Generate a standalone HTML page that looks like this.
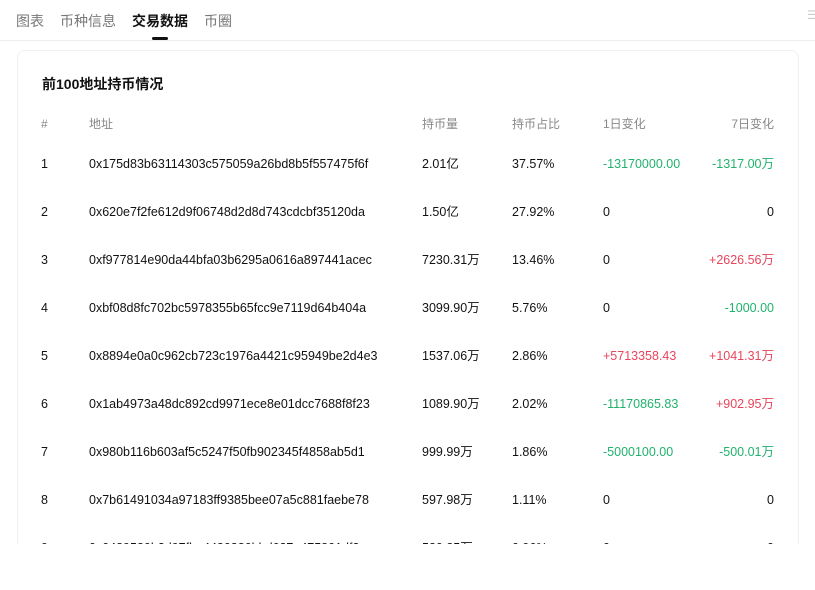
<!DOCTYPE html>
<html><head><meta charset="utf-8"><style>
*{margin:0;padding:0;box-sizing:border-box}
html,body{width:815px;height:590px;overflow:hidden}
body{background:#fff;font-family:"Liberation Sans","Noto Sans CJK SC",sans-serif;position:relative;color:#111}
.tabs{position:absolute;top:0;left:0;width:815px;height:41px;border-bottom:1px solid #eee}
.tab{position:absolute;top:11px;font-size:14px;color:#777}
.tab.a{color:#111;font-weight:bold}
.ul{position:absolute;left:152px;top:37px;width:16px;height:3px;background:#111;border-radius:2px}
.clip{position:absolute;left:0;top:41px;width:815px;height:503px;overflow:hidden}
.card{position:absolute;left:17px;top:9px;width:782px;height:540px;border:1px solid #f0f0f0;border-radius:8px}
h3{position:absolute;left:42px;top:75px;font-size:14px;font-weight:bold;line-height:18px}
.r{position:absolute;left:0;width:815px;font-size:12.5px;height:16px;line-height:16px}
.r span{position:absolute;top:0;line-height:16px;height:16px;white-space:nowrap}
.h{color:#888;font-size:12px}
.g{color:#20b26c}.d{color:#e8455c}
</style></head><body>
<div class="tabs">
<span class="tab" style="left:16px">图表</span>
<span class="tab" style="left:60px">币种信息</span>
<span class="tab a" style="left:132px">交易数据</span>
<span class="tab" style="left:204px">币圈</span>
<div class="ul"></div>
<span style="position:absolute;left:807px;top:8px;color:#ccc;font-size:12px">☰</span>
</div>
<div class="clip">
<div class="card"></div>
<div style="position:absolute;left:0;top:-41px;width:815px;height:590px">
<h3>前100地址持币情况</h3>
<div class="r h" style="top:116px"><span style="left:41px">#</span><span style="left:89px">地址</span><span style="left:422px">持币量</span><span style="left:512px">持币占比</span><span style="left:603px">1日变化</span><span style="right:41px">7日变化</span></div>
<div class="r" style="top:156px"><span style="left:41px">1</span><span style="left:89px">0x175d83b63114303c575059a26bd8b5f557475f6f</span><span style="left:422px">2.01亿</span><span style="left:512px">37.57%</span><span class="g" style="left:603px">-13170000.00</span><span class="g" style="right:41px">-1317.00万</span></div>
<div class="r" style="top:204px"><span style="left:41px">2</span><span style="left:89px">0x620e7f2fe612d9f06748d2d8d743cdcbf35120da</span><span style="left:422px">1.50亿</span><span style="left:512px">27.92%</span><span style="left:603px">0</span><span style="right:41px">0</span></div>
<div class="r" style="top:252px"><span style="left:41px">3</span><span style="left:89px">0xf977814e90da44bfa03b6295a0616a897441acec</span><span style="left:422px">7230.31万</span><span style="left:512px">13.46%</span><span style="left:603px">0</span><span class="d" style="right:41px">+2626.56万</span></div>
<div class="r" style="top:300px"><span style="left:41px">4</span><span style="left:89px">0xbf08d8fc702bc5978355b65fcc9e7119d64b404a</span><span style="left:422px">3099.90万</span><span style="left:512px">5.76%</span><span style="left:603px">0</span><span class="g" style="right:41px">-1000.00</span></div>
<div class="r" style="top:348px"><span style="left:41px">5</span><span style="left:89px">0x8894e0a0c962cb723c1976a4421c95949be2d4e3</span><span style="left:422px">1537.06万</span><span style="left:512px">2.86%</span><span class="d" style="left:603px">+5713358.43</span><span class="d" style="right:41px">+1041.31万</span></div>
<div class="r" style="top:396px"><span style="left:41px">6</span><span style="left:89px">0x1ab4973a48dc892cd9971ece8e01dcc7688f8f23</span><span style="left:422px">1089.90万</span><span style="left:512px">2.02%</span><span class="g" style="left:603px">-11170865.83</span><span class="d" style="right:41px">+902.95万</span></div>
<div class="r" style="top:444px"><span style="left:41px">7</span><span style="left:89px">0x980b116b603af5c5247f50fb902345f4858ab5d1</span><span style="left:422px">999.99万</span><span style="left:512px">1.86%</span><span class="g" style="left:603px">-5000100.00</span><span class="g" style="right:41px">-500.01万</span></div>
<div class="r" style="top:492px"><span style="left:41px">8</span><span style="left:89px">0x7b61491034a97183ff9385bee07a5c881faebe78</span><span style="left:422px">597.98万</span><span style="left:512px">1.11%</span><span style="left:603px">0</span><span style="right:41px">0</span></div>
<div class="r" style="top:540px"><span style="left:41px">9</span><span style="left:89px">0x0489580b3d97fbe4480880bbd627a475801df2</span><span style="left:422px">580.85万</span><span style="left:512px">0.96%</span><span style="left:603px">0</span><span style="right:41px">0</span></div>
</div>
</div>
</body></html>
